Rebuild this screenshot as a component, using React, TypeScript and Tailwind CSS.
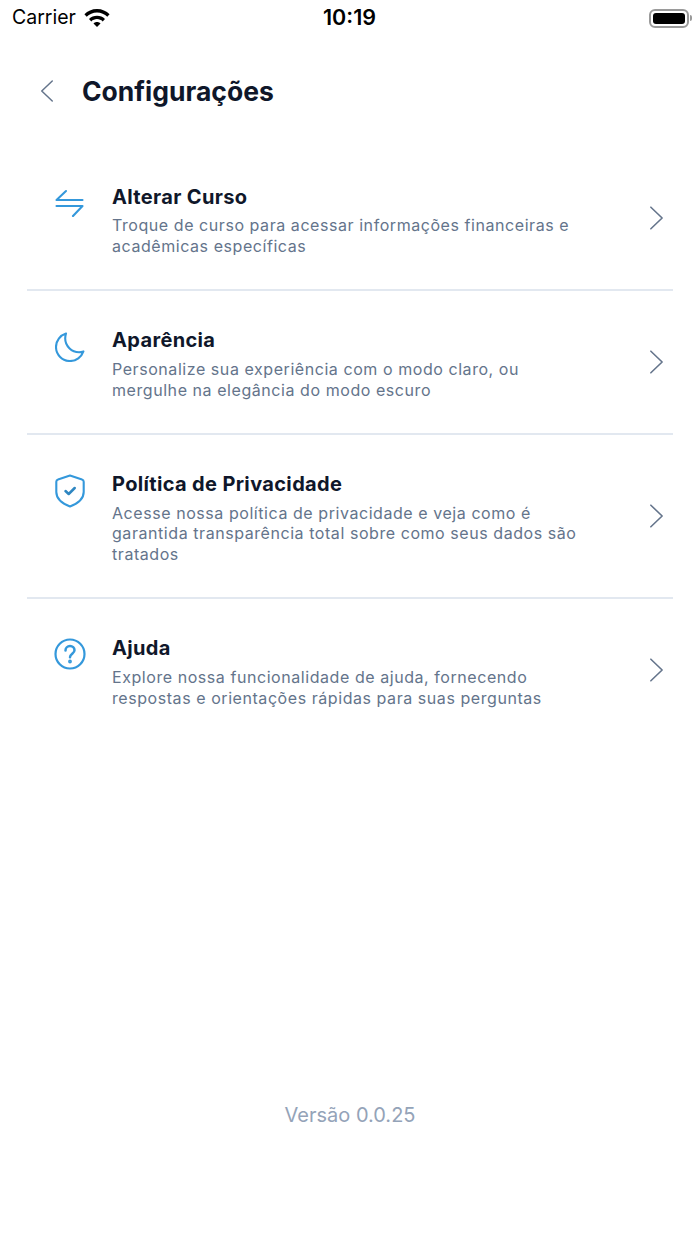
import React from 'react';

function Chevron({ className }: { className?: string }) {
  return (
    <svg className={className} viewBox="0 0 16 26" fill="none" stroke="currentColor" strokeWidth="1.700" strokeLinecap="round" strokeLinejoin="round">
      <path d="M2 1.500l12 11.500L2 24.500" />
    </svg>
  );
}

function SwapIcon() {
  return (
    <svg width="30" height="30" viewBox="0 0 30 30" fill="none" stroke="#3498db" strokeWidth="2.100" strokeLinecap="round" strokeLinejoin="round">
      <path d="M11 4L1.500 13H27.500" />
      <path d="M1.500 19H27.500L18 29" />
    </svg>
  );
}

function MoonIcon() {
  return (
    <svg width="30" height="30" viewBox="0 0 30 30" fill="none" stroke="#3498db" strokeWidth="2.100" strokeLinecap="round" strokeLinejoin="round">
      <path d="M11 1.500C5.200 3.300 1 8.600 1 15c0 7.800 6.300 14 14 14 6.200 0 11.500-4 13.400-9.600-1.400.5-2.900.8-4.400.8C16.700 20.200 10.200 14 10.200 6.500c0-1.700.3-3.400.8-5z" />
    </svg>
  );
}

function ShieldIcon() {
  return (
    <svg width="30" height="34" viewBox="0 0 30 34" fill="none" stroke="#3498db" strokeWidth="2.100" strokeLinecap="round" strokeLinejoin="round">
      <path d="M15 1.500L27 5.500c1 .3 1.700 1.200 1.700 2.300V18c0 6.500-6 11.500-13.700 14.500C7.300 29.500 1.300 24.500 1.300 18V7.800c0-1.100.7-2 1.700-2.300L15 1.500z" />
      <path d="M10.500 17l3.200 3 6-6" stroke="#2e86c1" strokeWidth="2.500" />
    </svg>
  );
}

function HelpIcon() {
  return (
    <svg width="32" height="32" viewBox="0 0 32 32" fill="none" stroke="#3498db" strokeWidth="2.200" strokeLinecap="round" strokeLinejoin="round">
      <circle cx="16" cy="16" r="14.500" />
      <path d="M11.500 12.500c0-2.600 2-4.500 4.500-4.500s4.500 1.800 4.500 4.200c0 3.300-4.500 3.700-4.500 7" strokeWidth="2.500" />
      <circle cx="16" cy="23.500" r="0.800" />
    </svg>
  );
}

const items = [
  {
    title: 'Alterar Curso',
    icon: <SwapIcon />,
    iconClass: 'pt-[4px] pl-[28px]',
    lines: ['Troque de curso para acessar informações financeiras e', 'acadêmicas específicas'],
  },
  {
    title: 'Aparência',
    icon: <MoonIcon />,
    iconClass: 'pt-[6px] pl-[28px]',
    lines: ['Personalize sua experiência com o modo claro, ou', 'mergulhe na elegância do modo escuro'],
  },
  {
    title: 'Política de Privacidade',
    icon: <ShieldIcon />,
    iconClass: 'pt-[4px] pl-[28px]',
    lines: ['Acesse nossa política de privacidade e veja como é', 'garantida transparência total sobre como seus dados são', 'tratados'],
  },
  {
    title: 'Ajuda',
    icon: <HelpIcon />,
    iconClass: 'pt-[4px] pl-[27px]',
    lines: ['Explore nossa funcionalidade de ajuda, fornecendo', 'respostas e orientações rápidas para suas perguntas'],
  },
];

export default function App() {
  return (
    <div className="w-[700px] h-[1244px] bg-white flex flex-col font-['Inter',sans-serif] overflow-hidden">
      {/* Status bar */}
      <div className="relative h-[36px] shrink-0 flex items-center justify-between pl-3 pr-[8px] text-black">
        <div className="flex items-center gap-[8px]">
          <span className="text-[19.500px] leading-none">Carrier</span>
          <svg width="26" height="19" viewBox="0 0 26 19" fill="currentColor">
            <path d="M13 0C8 0 3.600 2 .4 5.200l2.300 2.500C5.300 5 9 3.400 13 3.400s7.700 1.600 10.300 4.300l2.300-2.500C22.400 2 18 0 13 0z" />
            <path d="M13 6.700c-3.100 0-5.900 1.200-8 3.200l2.300 2.500c1.500-1.400 3.500-2.300 5.700-2.300s4.200.9 5.700 2.300l2.300-2.500c-2.100-2-4.900-3.200-8-3.200z" />
            <path d="M13 13c-1.400 0-2.600.6-3.500 1.400L13 18l3.500-3.600c-.9-.8-2.100-1.400-3.500-1.400z" />
          </svg>
        </div>
        <span className="absolute left-[323px] text-[21.500px] leading-none font-semibold">10:19</span>
        <div className="flex items-center gap-[1px]">
          <div className="w-[40px] h-[19px] rounded-[6px] border-2 border-[#9a9a9a] p-[2px]">
            <div className="w-full h-full bg-black rounded-[3px]" />
          </div>
          <div className="w-[2px] h-[6px] bg-[#9a9a9a] rounded-r-sm" />
        </div>
      </div>

      {/* Header */}
      <div className="flex items-center h-[38px] mt-[36px] pl-[40px] shrink-0">
        <Chevron className="text-[#64748b] w-[14px] h-[26px] rotate-180" />
        <h1 className="ml-[28px] text-[26.500px] leading-[37px] font-bold text-[#0f172a]">Configurações</h1>
      </div>

      {/* List */}
      <div className="mt-[37px] mx-[27px] flex-1">
        {items.map((item, i) => (
          <div key={item.title} className={`flex pt-[35.600px] pb-[32.500px] ${i < items.length - 1 ? 'border-b-2 border-[#e2e8f0]' : ''}`}>
            <div className={`w-[85px] shrink-0 ${item.iconClass}`}>{item.icon}</div>
            <div className="flex-1">
              <div className="text-[20px] leading-[28px] font-bold tracking-[0.35px] text-[#0f172a]">{item.title}</div>
              <div className="mt-[4.900px] text-[16px] leading-[20.400px] tracking-[0.56px] text-[#64748b]">
                {item.lines.map((line) => (
                  <div key={line}>{line}</div>
                ))}
              </div>
            </div>
            <div className="flex items-center pr-[9px] pb-[3px]">
              <Chevron className="text-[#64748b] w-[15px] h-[26px]" />
            </div>
          </div>
        ))}
      </div>

      {/* Version */}
      <div className="h-[143px] shrink-0 text-center text-[20px] leading-[28px] text-[#94a3b8]">Versão 0.0.25</div>
    </div>
  );
}
